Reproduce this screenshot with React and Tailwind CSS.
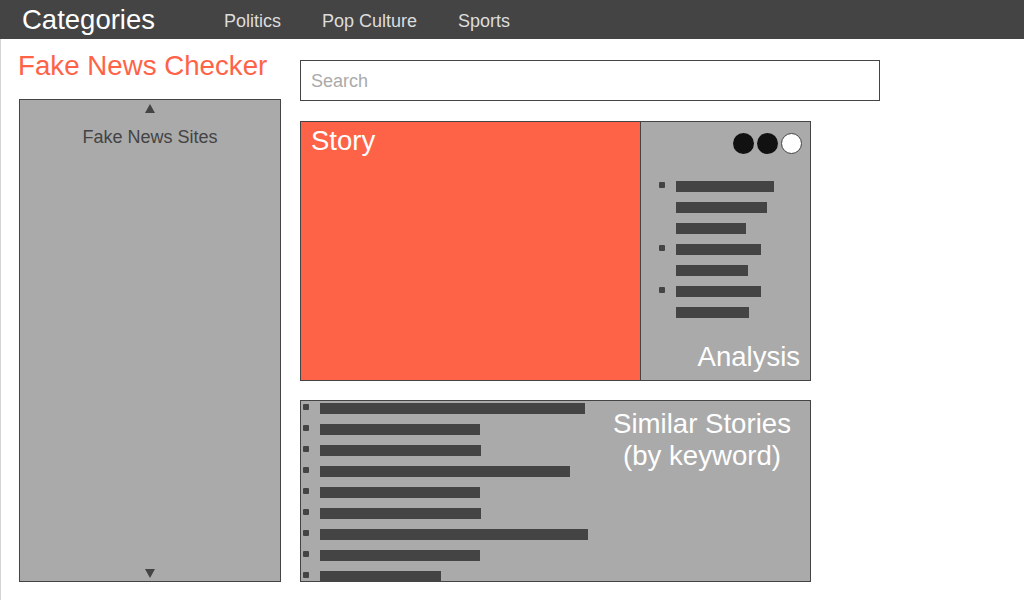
import React from "react";

const font = { fontFamily: '"Liberation Sans", Arial, sans-serif' };

function Bar({ w, bullet }) {
  return (
    <div className="flex items-start h-[11px]">
      <div className={"w-[6px] h-[6px] mt-[1px] rounded-[1px] " + (bullet ? "bg-[#444]" : "bg-transparent")} />
      <div className="ml-[11px] h-[11px] bg-[#444]" style={{ width: w }} />
    </div>
  );
}

function Up() {
  return (
    <svg width="10" height="9" viewBox="0 0 10 9" className="block">
      <polygon points="5,0 10,9 0,9" fill="#444" />
    </svg>
  );
}
function Down() {
  return (
    <svg width="10" height="9" viewBox="0 0 10 9" className="block">
      <polygon points="0,0 10,0 5,9" fill="#444" />
    </svg>
  );
}

export default function App() {
  const analysis = [
    [98, true],
    [91, false],
    [70, false],
    [85, true],
    [72, false],
    [85, true],
    [73, false],
  ];
  const similar = [265, 160, 161, 250, 160, 161, 268, 160, 121];
  return (
    <div className="w-[1024px] h-[600px] bg-white overflow-hidden" style={font}>
      <header className="h-[39px] bg-[#444] flex items-start pl-[22px]">
        <div className="w-[202px] pt-[4px] text-[27.5px] leading-[32px] text-white">Categories</div>
        <nav className="flex gap-[41px] pt-[11px] text-[18px] leading-[21px] text-[#ddd]">
          <span>Politics</span>
          <span>Pop Culture</span>
          <span>Sports</span>
        </nav>
      </header>
      <div className="h-[561px] border-l border-[#d4d4d4] flex pl-[18px] gap-[19px]">
        <aside className="w-[262px] flex flex-col">
          <h1 className="mt-[11px] -ml-[1px] h-[32px] whitespace-nowrap text-[27.7px] leading-[32px] text-[#ff6347]">Fake News Checker</h1>
          <div className="mt-[17px] h-[483px] border border-[#444] bg-[#aaa] flex flex-col items-center pt-[4px] pb-[3px]">
            <Up />
            <div className="mt-[14px] text-[18px] leading-[21px] text-[#444]">Fake News Sites</div>
            <div className="mt-auto">
              <Down />
            </div>
          </div>
        </aside>
        <main className="flex flex-col">
          <input
            type="text"
            placeholder="Search"
            className="mt-[21px] w-[580px] h-[41px] border border-[#444] px-[10px] pt-[2px] text-[18px] leading-[21px] text-[#444] placeholder:text-[#aaa] outline-none bg-white"
            style={font}
          />
          <div className="mt-[20px] w-[511px] h-[260px] border border-[#444] flex">
            <div className="w-[339px] bg-[#ff6347] pt-[3px] pl-[10px] text-[27.5px] leading-[32px] text-white">Story</div>
            <div className="flex-1 border-l border-[#444] bg-[#aaa] flex flex-col">
              <div className="flex justify-end gap-[3px] pt-[11px] pr-[8px]">
                <div className="w-[21px] h-[21px] rounded-full bg-[#111]" />
                <div className="w-[21px] h-[21px] rounded-full bg-[#111]" />
                <div className="w-[21px] h-[21px] rounded-full bg-white border border-[#444]" />
              </div>
              <div className="mt-[27px] pl-[18px] flex flex-col gap-[10px]">
                {analysis.map(([w, b], i) => (
                  <Bar key={i} w={w} bullet={b} />
                ))}
              </div>
              <div className="mt-auto pb-[7px] pr-[10px] text-right text-[27.5px] leading-[32px] text-white">Analysis</div>
            </div>
          </div>
          <div className="mt-[19px] w-[511px] h-[182px] border border-[#444] bg-[#aaa] flex overflow-hidden">
            <div className="pt-[2px] pl-[2px] flex flex-col gap-[10px]">
              {similar.map((w, i) => (
                <Bar key={i} w={w} bullet />
              ))}
            </div>
            <div className="ml-auto mr-[8px] w-[200px] pt-[7px] text-center text-[27.6px] leading-[32px] text-white">
              Similar Stories
              <br />
              (by keyword)
            </div>
          </div>
        </main>
      </div>
    </div>
  );
}
